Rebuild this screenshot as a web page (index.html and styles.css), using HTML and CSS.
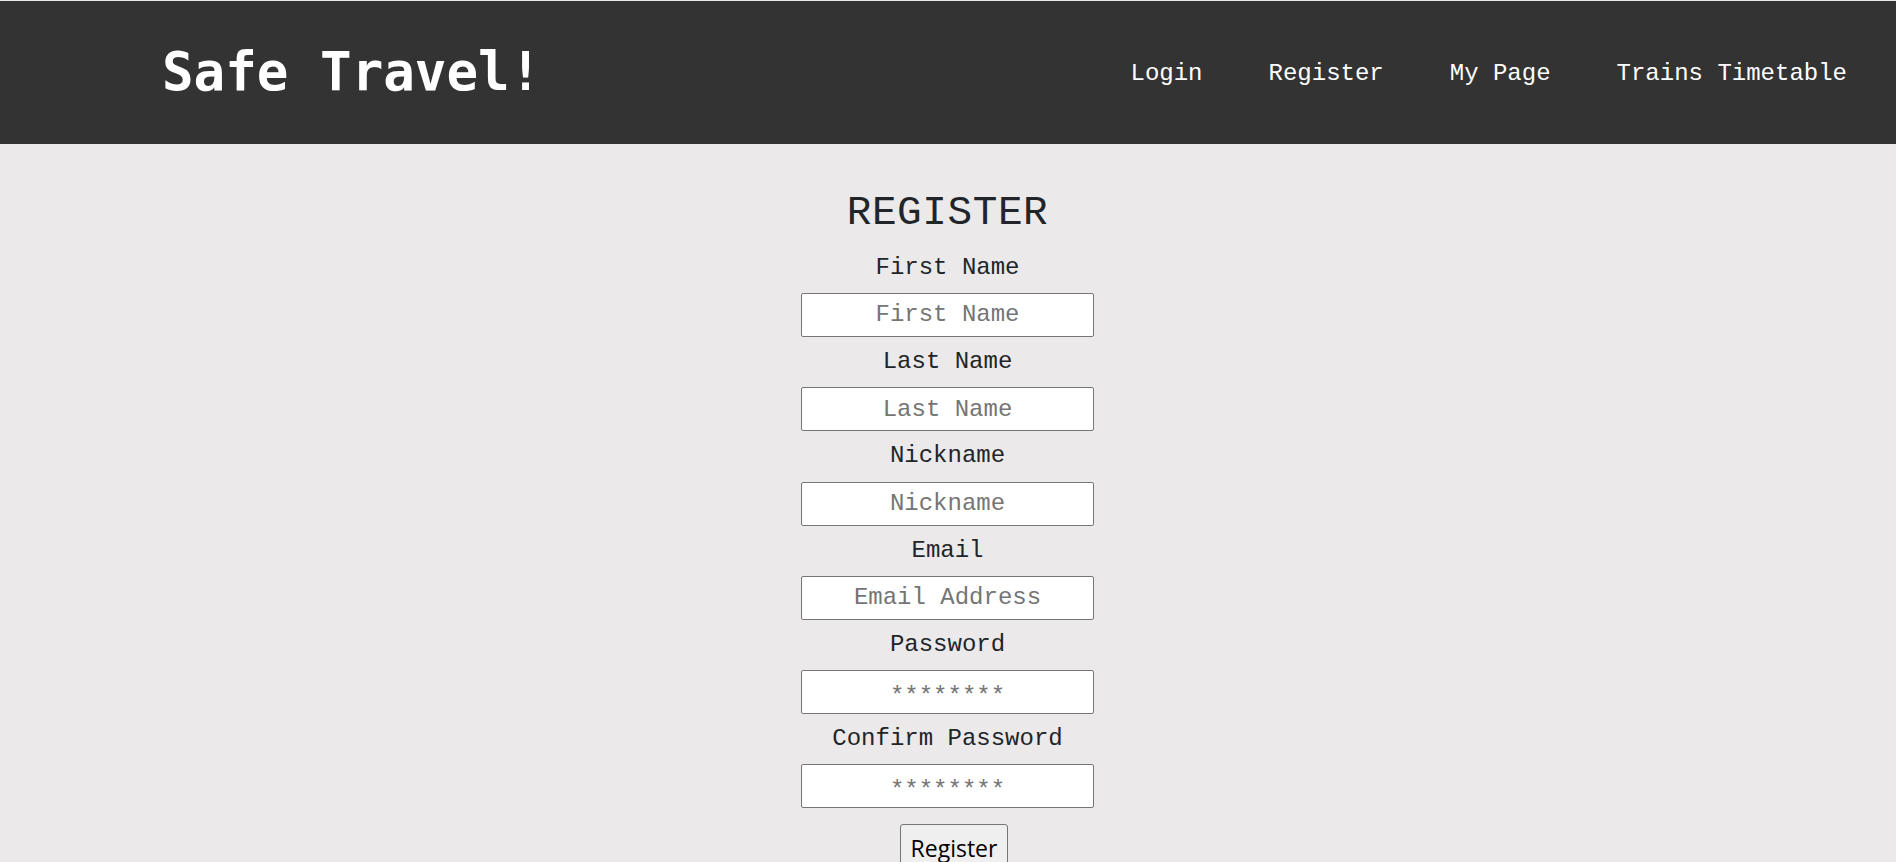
FILE: index.html
```html
<!DOCTYPE html>
<html lang="en">
<head>
<meta charset="utf-8">
<title>Safe Travel! - Register</title>
<link rel="stylesheet" href="styles.css">
</head>
<body>
<header class="topbar">
  <div class="brand">Safe Travel!</div>
  <nav class="nav">
    <a class="nav-link" href="#">Login</a>
    <a class="nav-link" href="#">Register</a>
    <a class="nav-link" href="#">My Page</a>
    <a class="nav-link" href="#">Trains Timetable</a>
  </nav>
</header>
<main class="content">
  <form class="register-form">
    <h1 class="form-title">REGISTER</h1>
    <div class="field">
      <label class="field-label" for="fn">First Name</label>
      <input class="field-input" id="fn" type="text" placeholder="First Name">
    </div>
    <div class="field">
      <label class="field-label" for="ln">Last Name</label>
      <input class="field-input" id="ln" type="text" placeholder="Last Name">
    </div>
    <div class="field">
      <label class="field-label" for="nn">Nickname</label>
      <input class="field-input" id="nn" type="text" placeholder="Nickname">
    </div>
    <div class="field">
      <label class="field-label" for="em">Email</label>
      <input class="field-input" id="em" type="email" placeholder="Email Address">
    </div>
    <div class="field">
      <label class="field-label" for="pw">Password</label>
      <input class="field-input field-input--secret" id="pw" type="password" placeholder="********">
    </div>
    <div class="field">
      <label class="field-label" for="cpw">Confirm Password</label>
      <input class="field-input field-input--secret" id="cpw" type="password" placeholder="********">
    </div>
    <button class="submit-btn" type="button">Register</button>
  </form>
</main>
</body>
</html>
```
FILE: styles.css
```css
html, body {
  margin: 0;
  padding: 0;
}

body {
  background: #ebe9ea;
  color: #212529;
  font-family: "Liberation Mono", "DejaVu Sans Mono", monospace;
  overflow: hidden;
}

.topbar {
  margin-top: 1px;
  height: 143px;
  background: #333333;
  display: flex;
  align-items: center;
  justify-content: space-between;
  padding: 0 49px 0 162px;
}

.brand {
  font-family: "DejaVu Sans Mono", monospace;
  font-weight: bold;
  font-size: 52.5px;
  color: #ffffff;
  margin-bottom: 2px;
}

.nav {
  display: flex;
  gap: 66px;
  margin-top: 1px;
}

.nav-link {
  font-family: "Liberation Mono", monospace;
  font-size: 24px;
  color: #ffffff;
  text-decoration: none;
}

.content {
  display: flex;
  justify-content: center;
  padding-right: 1px;
}

.register-form {
  display: flex;
  flex-direction: column;
  align-items: center;
  padding-top: 44.5px;
}

.form-title {
  margin: 0;
  font-size: 41px;
  font-weight: normal;
  line-height: 1.2;
  letter-spacing: 0.6px;
}

.field {
  display: flex;
  flex-direction: column;
  align-items: center;
  margin-top: 11px;
}

.form-title + .field {
  margin-top: 16px;
}

.field-label {
  font-size: 24px;
  line-height: 1.2;
}

.field-input {
  margin-top: 10.5px;
  box-sizing: border-box;
  width: 293px;
  height: 44px;
  padding: 0;
  border: 1px solid #767676;
  border-radius: 2px;
  background: #ffffff;
  font-family: "Liberation Mono", monospace;
  font-size: 24px;
  text-align: center;
  color: #212529;
}

.field-input--secret {
  padding-top: 8px;
}

.field-input::placeholder {
  color: #757575;
}

.submit-btn {
  margin-top: 16px;
  margin-left: 13px;
  padding: 7px 10px 6px;
  border: 1px solid #767676;
  border-radius: 3px;
  background: #efefef;
  font-family: "Open Sans", "Noto Sans", sans-serif;
  font-size: 23px;
  color: #000000;
}
```
